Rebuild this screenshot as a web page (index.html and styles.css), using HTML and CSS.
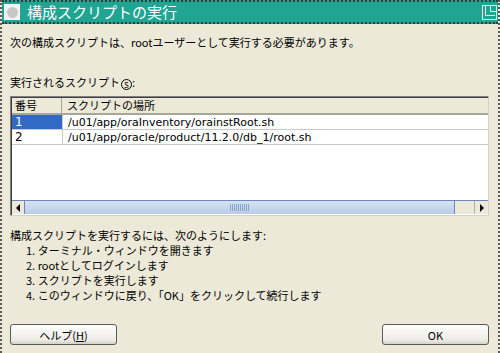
FILE: index.html
```html
<!DOCTYPE html>
<html lang="ja">
<head>
    <meta charset="UTF-8">
    <title>構成スクリプトの実行</title>
    <link rel="stylesheet" href="styles.css">
</head>
<body>
    <div class="window">
        <div class="title-bar">
            <span class="title-icon"><span class="title-dot"></span></span>
            <span class="title-text">構成スクリプトの実行</span>
            <svg class="title-max" width="15" height="15" viewBox="0 0 15 15">
                <rect x="0.5" y="0.5" width="14" height="14" fill="none" stroke="#d8f0ec"/>
                <path d="M3.5 1v9.5h9.5" fill="none" stroke="#d8f0ec"/>
                <path d="M8.5 1v5.5h6" fill="none" stroke="#d8f0ec"/>
            </svg>
        </div>

        <div class="content">
            <p class="intro">次の構成スクリプトは、rootユーザーとして実行する必要があります。</p>

            <p class="label">実行されるスクリプト<span class="mnemonic">S</span>:</p>

            <div class="table-box">
                <div class="table-head">
                    <div class="col-num">番号</div>
                    <div class="col-path">スクリプトの場所</div>
                </div>
                <div class="table-row">
                    <div class="col-num selected">1</div>
                    <div class="col-path">/u01/app/oraInventory/orainstRoot.sh</div>
                </div>
                <div class="table-row">
                    <div class="col-num">2</div>
                    <div class="col-path">/u01/app/oracle/product/11.2.0/db_1/root.sh</div>
                </div>
                <div class="table-fill"></div>
                <div class="hscroll">
                    <div class="arrow arrow-left"></div>
                    <div class="thumb"><span class="grip"></span></div>
                    <div class="track"></div>
                    <div class="arrow arrow-right"></div>
                </div>
            </div>

            <div class="steps">
                <p>構成スクリプトを実行するには、次のようにします:</p>
                <p class="step">1. ターミナル・ウィンドウを開きます</p>
                <p class="step">2. rootとしてログインします</p>
                <p class="step">3. スクリプトを実行します</p>
                <p class="step">4. このウィンドウに戻り、「OK」をクリックして続行します</p>
            </div>

            <div class="buttons">
                <button class="btn">ヘルプ(<u>H</u>)</button>
                <button class="btn">OK</button>
            </div>
        </div>
    </div>
</body>
</html>
```

FILE: styles.css
```css
* {
    margin: 0;
    padding: 0;
    box-sizing: border-box;
}

body {
    width: 500px;
    height: 353px;
    overflow: hidden;
    font-family: "Noto Sans CJK JP", "DejaVu Sans", sans-serif;
    font-size: 11px;
    color: #000;
    background: #ece9d8;
}

.window {
    width: 500px;
    height: 353px;
    display: flex;
    flex-direction: column;
    border-left: 2px dotted #5a5a5a;
    border-right: 2px dotted #5a5a5a;
}

.title-bar {
    height: 24px;
    flex-shrink: 0;
    display: flex;
    align-items: center;
    background: #20a592;
    border-top: 2px dotted #3a3a3a;
    border-bottom: 2px dotted #3a3a3a;
    padding: 0 1px 0 2px;
    color: #fff;
}

.title-icon {
    width: 16px;
    height: 16px;
    background: #f4f4f4;
    display: flex;
    align-items: center;
    justify-content: center;
}

.title-dot {
    width: 11px;
    height: 11px;
    border-radius: 50%;
    background: #c8c8c8;
}

.title-text {
    margin-left: 7px;
    font-size: 15px;
    line-height: 20px;
    flex: 1;
}

.content {
    flex: 1;
    padding: 9px 9px 0 8px;
    display: flex;
    flex-direction: column;
}

.intro {
    line-height: 18px;
}

.label {
    margin-top: 22px;
    line-height: 18px;
}

.mnemonic {
    display: inline-block;
    width: 11px;
    height: 11px;
    border: 1px solid #000;
    border-radius: 50%;
    font-size: 8px;
    line-height: 9px;
    text-align: center;
    vertical-align: -1px;
    margin-left: 1px;
}

.table-box {
    margin-top: 5px;
    height: 120px;
    display: flex;
    flex-direction: column;
    background: #fff;
    border: 1px solid #808080;
    border-right-color: #d4d0c8;
    border-bottom-color: #d4d0c8;
    box-shadow: inset 1px 1px 0 #404040;
}

.table-head,
.table-row {
    display: flex;
    line-height: 15px;
}

.table-head {
    height: 17px;
    margin: 1px 0 0 1px;
    background: #ece9d8;
    border-bottom: 2px solid #a7a69a;
}

.table-head .col-num {
    border-right: 1px solid #a7a69a;
}

.table-row {
    height: 15px;
    margin-left: 1px;
    border-bottom: 1px solid #c8c8c8;
    font-size: 11px;
}

.col-num {
    width: 50px;
    padding-left: 3px;
}

.col-path {
    flex: 1;
    padding-left: 5px;
    border-left: 1px solid #c8c8c8;
    font-family: "DejaVu Sans", "Noto Sans CJK JP", sans-serif;
}

.table-head .col-path {
    border-left: none;
    font-family: "Noto Sans CJK JP", sans-serif;
}

.table-row .col-num {
    font-family: "DejaVu Sans", sans-serif;
    font-size: 12px;
}

.selected {
    background: #316ac5;
    color: #fff;
}

.table-fill {
    flex: 1;
}

.hscroll {
    height: 14px;
    margin: 0 0 1px 1px;
    display: flex;
    border-top: 1px solid #6d87bd;
}

.arrow {
    width: 13px;
    background: #ece9d8;
    position: relative;
}

.arrow-left {
    border-right: 1px solid #6d87bd;
}

.arrow-left::after,
.arrow-right::after {
    content: "";
    position: absolute;
    top: 3px;
    border-top: 4px solid transparent;
    border-bottom: 4px solid transparent;
}

.arrow-left::after {
    left: 4px;
    border-right: 4px solid #000;
}

.arrow-right::after {
    left: 5px;
    border-left: 4px solid #000;
}

.thumb {
    width: 430px;
    background: linear-gradient(#d6e2f2, #b9cce6);
    border-right: 1px solid #6d87bd;
    display: flex;
    align-items: center;
    justify-content: center;
}

.grip {
    width: 20px;
    height: 7px;
    background: repeating-linear-gradient(90deg, #8aa3cb 0 1px, transparent 1px 2px);
}

.track {
    flex: 1;
    background: #ece9d8;
    border-right: 1px solid #b0b0a8;
}

.steps {
    margin-top: 12px;
    line-height: 15px;
}

.step {
    padding-left: 16px;
}

.buttons {
    margin-top: 21px;
    display: flex;
    justify-content: space-between;
}

.btn {
    width: 107px;
    height: 21px;
    font-family: "Noto Sans CJK JP", sans-serif;
    font-size: 11px;
    color: #000;
    background: linear-gradient(#fdfdfb, #ecebe6 80%, #d6d0c5);
    border: 1px solid #5a5a5a;
    border-radius: 3px;
}
```
